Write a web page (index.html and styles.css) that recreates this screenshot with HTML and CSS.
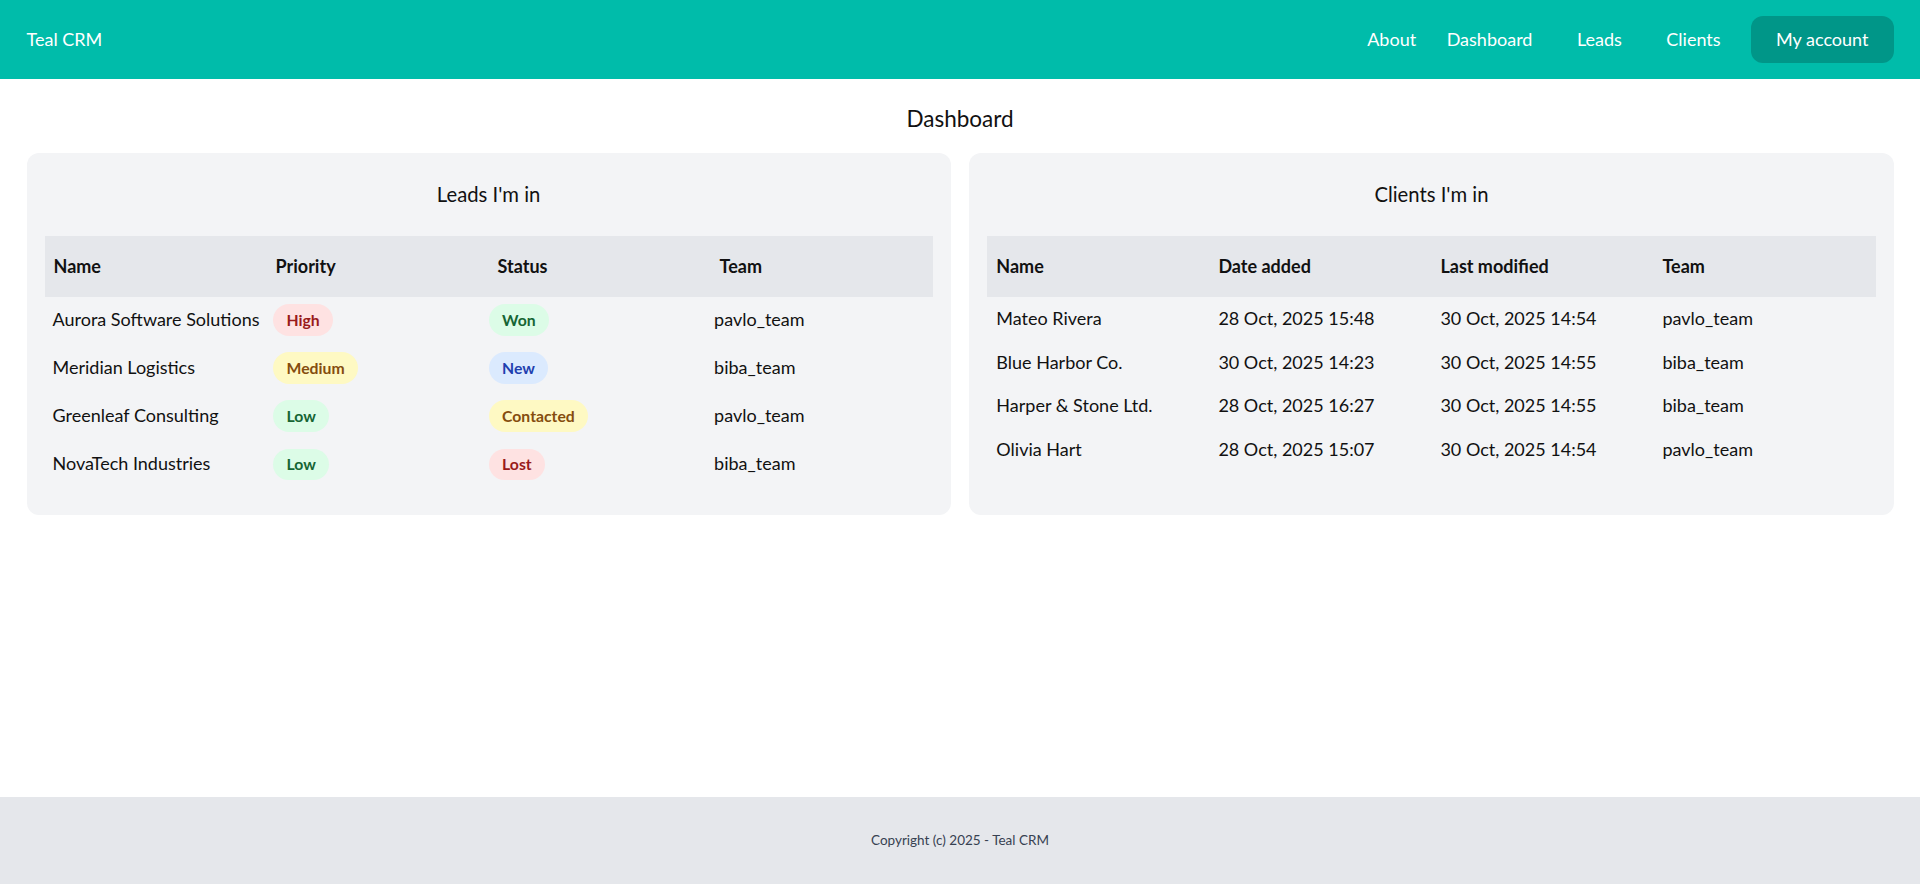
FILE: index.html
```html
<!DOCTYPE html>
<html lang="en">
<head>
<meta charset="utf-8">
<title>Teal CRM</title>
<link rel="stylesheet" href="styles.css">
</head>
<body>
<header class="topbar">
  <a class="brand" href="#">Teal CRM</a>
  <nav class="nav">
    <a class="nav-link" href="#">About</a>
    <a class="nav-link" href="#">Dashboard</a>
    <a class="nav-link spaced" href="#">Leads</a>
    <a class="nav-link spaced" href="#">Clients</a>
    <a class="account-btn" href="#">My account</a>
  </nav>
</header>

<main class="main">
  <h1 class="page-title">Dashboard</h1>
  <div class="panels">
    <section class="panel">
      <h2 class="panel-title">Leads I'm in</h2>
      <table class="data-table leads-table">
        <thead>
          <tr><th>Name</th><th>Priority</th><th>Status</th><th>Team</th></tr>
        </thead>
        <tbody>
          <tr>
            <td>Aurora Software Solutions</td>
            <td><span class="badge red">High</span></td>
            <td><span class="badge green">Won</span></td>
            <td>pavlo_team</td>
          </tr>
          <tr>
            <td>Meridian Logistics</td>
            <td><span class="badge yellow">Medium</span></td>
            <td><span class="badge blue">New</span></td>
            <td>biba_team</td>
          </tr>
          <tr>
            <td>Greenleaf Consulting</td>
            <td><span class="badge green">Low</span></td>
            <td><span class="badge yellow">Contacted</span></td>
            <td>pavlo_team</td>
          </tr>
          <tr>
            <td>NovaTech Industries</td>
            <td><span class="badge green">Low</span></td>
            <td><span class="badge red">Lost</span></td>
            <td>biba_team</td>
          </tr>
        </tbody>
      </table>
    </section>

    <section class="panel">
      <h2 class="panel-title">Clients I'm in</h2>
      <table class="data-table">
        <thead>
          <tr><th>Name</th><th>Date added</th><th>Last modified</th><th>Team</th></tr>
        </thead>
        <tbody>
          <tr><td>Mateo Rivera</td><td>28 Oct, 2025 15:48</td><td>30 Oct, 2025 14:54</td><td>pavlo_team</td></tr>
          <tr><td>Blue Harbor Co.</td><td>30 Oct, 2025 14:23</td><td>30 Oct, 2025 14:55</td><td>biba_team</td></tr>
          <tr><td>Harper &amp; Stone Ltd.</td><td>28 Oct, 2025 16:27</td><td>30 Oct, 2025 14:55</td><td>biba_team</td></tr>
          <tr><td>Olivia Hart</td><td>28 Oct, 2025 15:07</td><td>30 Oct, 2025 14:54</td><td>pavlo_team</td></tr>
        </tbody>
      </table>
    </section>
  </div>
</main>

<footer class="footer">
  <p class="copyright">Copyright (c) 2025 - Teal CRM</p>
</footer>
</body>
</html>
```

FILE: styles.css
```css
* {
  box-sizing: border-box;
}

html, body {
  margin: 0;
  padding: 0;
}

body {
  font-family: "Lato", "Noto Sans", "DejaVu Sans", sans-serif;
  font-size: 18px;
  line-height: 27px;
  color: #111;
  background: #ffffff;
  min-height: 100vh;
  display: flex;
  flex-direction: column;
}

a {
  color: inherit;
  text-decoration: none;
}

/* ---------- top bar ---------- */
.topbar {
  height: 79px;
  flex: none;
  background: #00bcaa;
  display: flex;
  align-items: center;
  justify-content: space-between;
  padding: 0 26.5px;
  color: #ffffff;
}

.brand {
  font-size: 18px;
  line-height: 27px;
}

.nav {
  display: flex;
  align-items: center;
  gap: 30.5px;
}

.nav-link {
  font-size: 18px;
  line-height: 27px;
}

.nav-link.spaced {
  padding-left: 14px;
}

.account-btn {
  display: inline-flex;
  align-items: center;
  height: 47px;
  padding: 0 25px;
  border-radius: 12px;
  background: #009688;
  font-size: 18px;
  line-height: 27px;
}

/* ---------- main ---------- */
.main {
  flex: 1;
  padding: 24px 26.5px 0;
}

.page-title {
  margin: 0 0 18.5px;
  font-size: 22.5px;
  line-height: 31.5px;
  font-weight: 400;
  text-align: center;
}

.panels {
  display: grid;
  grid-template-columns: 1fr 1fr;
  gap: 18.7px;
}

.panel {
  background: #f3f4f6;
  border-radius: 12px;
  padding: 26px 18px 25.5px;
}

.panel-title {
  margin: 0 0 25.5px;
  font-size: 20.25px;
  line-height: 31.5px;
  font-weight: 400;
  text-align: center;
}

/* ---------- tables ---------- */
.data-table {
  width: 100%;
  border-collapse: collapse;
  table-layout: fixed;
}

.data-table thead tr {
  background: #e5e7eb;
}

.data-table th {
  text-align: left;
  font-weight: 700;
  padding: 17px 9px;
  line-height: 27px;
}

.data-table td {
  padding: 8.3px 9px;
  line-height: 27px;
  vertical-align: baseline;
  white-space: nowrap;
}

.leads-table td {
  padding-top: 7.3px;
  padding-bottom: 9.3px;
}

.leads-table td:nth-child(1) {
  padding-left: 8px;
}

.leads-table td:nth-child(2) {
  padding-left: 6.5px;
}

.leads-table td:nth-child(3) {
  padding-left: 0;
}

.leads-table td:nth-child(4) {
  padding-left: 3.5px;
}

.badge {
  display: inline-block;
  padding: 4.5px 13.5px;
  border-radius: 9999px;
  font-size: 15.75px;
  line-height: 22.5px;
  font-weight: 700;
}

.badge.red {
  background: #fee2e2;
  color: #991b1b;
}

.badge.green {
  background: #dcfce7;
  color: #166534;
}

.badge.yellow {
  background: #fef9c3;
  color: #854d0e;
}

.badge.blue {
  background: #dbeafe;
  color: #1e40af;
}

/* ---------- footer ---------- */
.footer {
  flex: none;
  height: 87.3px;
  background: #e5e7eb;
  display: flex;
  align-items: center;
  justify-content: center;
}

.copyright {
  margin: 0;
  font-size: 13.5px;
  line-height: 20px;
  color: #374151;
}
```
